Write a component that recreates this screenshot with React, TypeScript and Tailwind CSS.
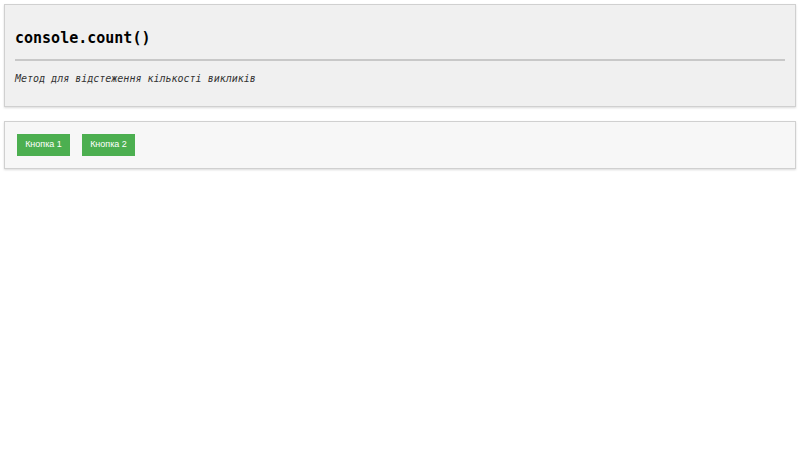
export default function App() {
  return (
    <div className="min-h-[450px] bg-white p-1 font-['Liberation_Sans',sans-serif]">
      <section className="border border-[#d0d0d0] bg-[#f0f0f0] px-[10px] pb-[20px] pt-[23px] shadow-[0_1px_2px_rgba(0,0,0,0.15)]">
        <h1 className="font-['DejaVu_Sans_Mono',monospace] text-[15px] font-bold leading-[20px] text-black">
          console.count()
        </h1>
        <hr className="mt-[11px] border-t-2 border-[#c8c8c8]" />
        <p className="mt-[11px] font-['DejaVu_Sans_Mono',monospace] text-[10px] italic leading-[14px] text-[#333]">
          Метод для відстеження кількості викликів
        </p>
      </section>

      <section className="mt-[14px] flex gap-3 border border-[#d0d0d0] bg-[#f7f7f7] px-3 py-3 shadow-[0_1px_2px_rgba(0,0,0,0.15)]">
        <button
          type="button"
          className="h-[22px] w-[53px] bg-[#4caf50] text-[9px] text-white"
        >
          Кнопка 1
        </button>
        <button
          type="button"
          className="h-[22px] w-[53px] bg-[#4caf50] text-[9px] text-white"
        >
          Кнопка 2
        </button>
      </section>
    </div>
  );
}
